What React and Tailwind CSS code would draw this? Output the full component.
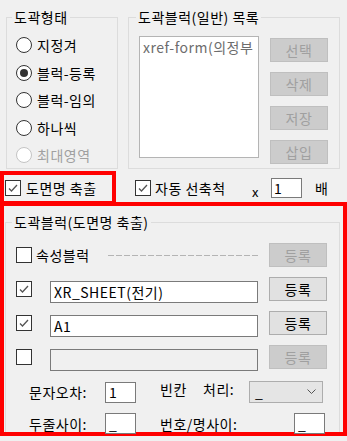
import React from "react";

function Check({ checked }) {
  return (
    <span className="w-[16px] h-[16px] border border-[#333333] bg-white flex items-center justify-center shrink-0">
      {checked && (
        <svg width="12" height="12" viewBox="0 0 12 12">
          <path d="M2 6.5 L4.5 9 L10 3" fill="none" stroke="#555555" strokeWidth="1.3" />
        </svg>
      )}
    </span>
  );
}

function Radio({ label, selected, disabled }) {
  return (
    <div className="flex items-center h-[16px]">
      <span
        className={
          disabled
            ? "w-[16px] h-[16px] rounded-full border border-[#c4c4c4] bg-white flex items-center justify-center shrink-0"
            : "w-[16px] h-[16px] rounded-full border border-[#333333] bg-white flex items-center justify-center shrink-0"
        }
      >
        {selected && <span className="w-[8px] h-[8px] rounded-full bg-[#333333]" />}
      </span>
      <span className={disabled ? "ml-[5px] text-[#a0a0a0]" : "ml-[5px]"}>{label}</span>
    </div>
  );
}

function Btn({ label, disabled }) {
  return (
    <div
      className={
        disabled
          ? "w-[58px] h-[24px] border border-[#bfbfbf] bg-[#cccccc] text-[#a0a0a0] flex items-center justify-center shrink-0"
          : "w-[58px] h-[24px] border border-[#adadad] bg-[#e1e1e1] flex items-center justify-center shrink-0"
      }
    >
      {label}
    </div>
  );
}

function Field({ value, width, disabled }) {
  return (
    <div
      className={
        disabled
          ? "h-[22px] border border-[#7a7a7a] bg-[#f0f0f0] shrink-0"
          : "h-[22px] border border-[#7a7a7a] bg-white flex items-center pl-[3px] shrink-0"
      }
      style={{ width }}
    >
      {value}
    </div>
  );
}

function Small({ value }) {
  return (
    <div className="w-[31px] h-[21px] border border-[#7a7a7a] bg-white flex items-center pl-[3px] shrink-0">
      {value}
    </div>
  );
}

export default function App() {
  return (
    <div className="w-[347px] h-[441px] bg-[#f0f0f0] overflow-hidden text-[14px] leading-[16px] tracking-[0.5px] text-black font-['Noto_Sans_CJK_KR',sans-serif]">
      {/* top group boxes */}
      <div className="flex pl-[6px] pt-[9px]">
        <fieldset className="w-[112px] h-[160px] border border-[#dcdcdc]">
          <legend className="ml-[5px] px-[2px]">도곽형태</legend>
          <div className="flex flex-col gap-[11.5px] pl-[9px] pt-[12px]">
            <Radio label="지정겨" />
            <Radio label="블럭-등록" selected />
            <Radio label="블럭-임의" />
            <Radio label="하나씩" />
            <Radio label="최대영역" disabled />
          </div>
        </fieldset>
        <fieldset className="ml-[10px] w-[212px] h-[160px] border border-[#dcdcdc]">
          <legend className="ml-[7px] px-[2px]">도곽블럭(일반) 목록</legend>
          <div className="flex pl-[10px] pt-[11px]">
            <div className="w-[120px] h-[122px] border border-[#b4b4b4] bg-white pl-[3px] pt-[2px] text-[#6d6d6d] overflow-hidden whitespace-nowrap">
              xref-form(의정부
            </div>
            <div className="flex flex-col gap-[10px] ml-[11px] mt-[2px]">
              <Btn label="선택" disabled />
              <Btn label="삭제" disabled />
              <Btn label="저장" disabled />
              <Btn label="삽입" disabled />
            </div>
          </div>
        </fieldset>
      </div>

      {/* options row */}
      <div className="flex items-center mt-[2px] h-[34px]">
        <div className="w-[116px] h-[34px] border-4 border-[#ff0000] flex items-center pl-[1px]">
          <Check checked />
          <span className="ml-[5px]">도면명 축출</span>
        </div>
        <div className="ml-[19px] flex items-center">
          <Check checked />
          <span className="ml-[4px] w-[97px]">자동 선축척</span>
        </div>
        <span className="w-[19px] mt-[8px] text-[13px]">x</span>
        <div className="w-[31px] h-[20px] border border-[#7a7a7a] bg-white flex items-center pl-[2px]">1</div>
        <span className="ml-[13px]">배</span>
      </div>

      {/* extraction group */}
      <div className="mt-[-3px] w-[347px] h-[234px] border-4 border-[#ff0000]">
        <fieldset className="ml-[1px] mt-[8px] w-[335px] h-[218px] border border-b-0 border-[#dcdcdc]">
          <legend className="ml-[6px] px-[2px]">도곽블럭(도면명 축출)</legend>
          <div className="flex flex-col gap-[10px] pl-[10px] pt-[13px]">
            <div className="flex items-center h-[24px]">
              <Check />
              <div className="w-[222px] ml-[4px] flex items-center">
                <span>속성블럭</span>
                <span className="ml-[18px] flex-1 h-[1px] bg-[repeating-linear-gradient(90deg,#b4b4b4_0_6px,transparent_6px_8px)]" />
              </div>
              <div className="ml-[11px]">
                <Btn label="등록" disabled />
              </div>
            </div>
            <div className="flex items-center h-[24px]">
              <Check checked />
              <div className="w-[222px] ml-[4px] pl-[14px] mt-[6px]">
                <Field value="XR_SHEET(전기)" width={208} />
              </div>
              <div className="ml-[11px]">
                <Btn label="등록" />
              </div>
            </div>
            <div className="flex items-center h-[24px]">
              <Check checked />
              <div className="w-[222px] ml-[4px] pl-[14px] mt-[6px]">
                <Field value="A1" width={208} />
              </div>
              <div className="ml-[11px]">
                <Btn label="등록" />
              </div>
            </div>
            <div className="flex items-center h-[24px]">
              <Check />
              <div className="w-[222px] ml-[4px] pl-[14px] mt-[6px]">
                <Field value="" width={208} disabled />
              </div>
              <div className="ml-[11px]">
                <Btn label="등록" disabled />
              </div>
            </div>

            <div className="flex items-center h-[22px] mt-[2px] pl-[13px]">
              <span className="w-[76px]">문자오차:</span>
              <Small value="1" />
              <span className="ml-[24px] w-[43px] mb-[6px]">빈칸</span>
              <span className="w-[46px] mb-[6px]">처리:</span>
              <div className="w-[74px] h-[22px] border border-[#adadad] bg-[#e5e5e5] flex items-center justify-between pl-[5px] pr-[6px]">
                <span>_</span>
                <svg width="9" height="6" viewBox="0 0 9 6">
                  <path d="M0.5 0.5 L4.5 4.5 L8.5 0.5" fill="none" stroke="#555555" strokeWidth="1" />
                </svg>
              </div>
            </div>
            <div className="flex items-center h-[21px] pl-[13px]">
              <span className="w-[76px]">두줄사이:</span>
              <Small value="_" />
              <span className="ml-[24px] w-[134px]">번호/명사이:</span>
              <Small value="_" />
            </div>
          </div>
        </fieldset>
      </div>
    </div>
  );
}
